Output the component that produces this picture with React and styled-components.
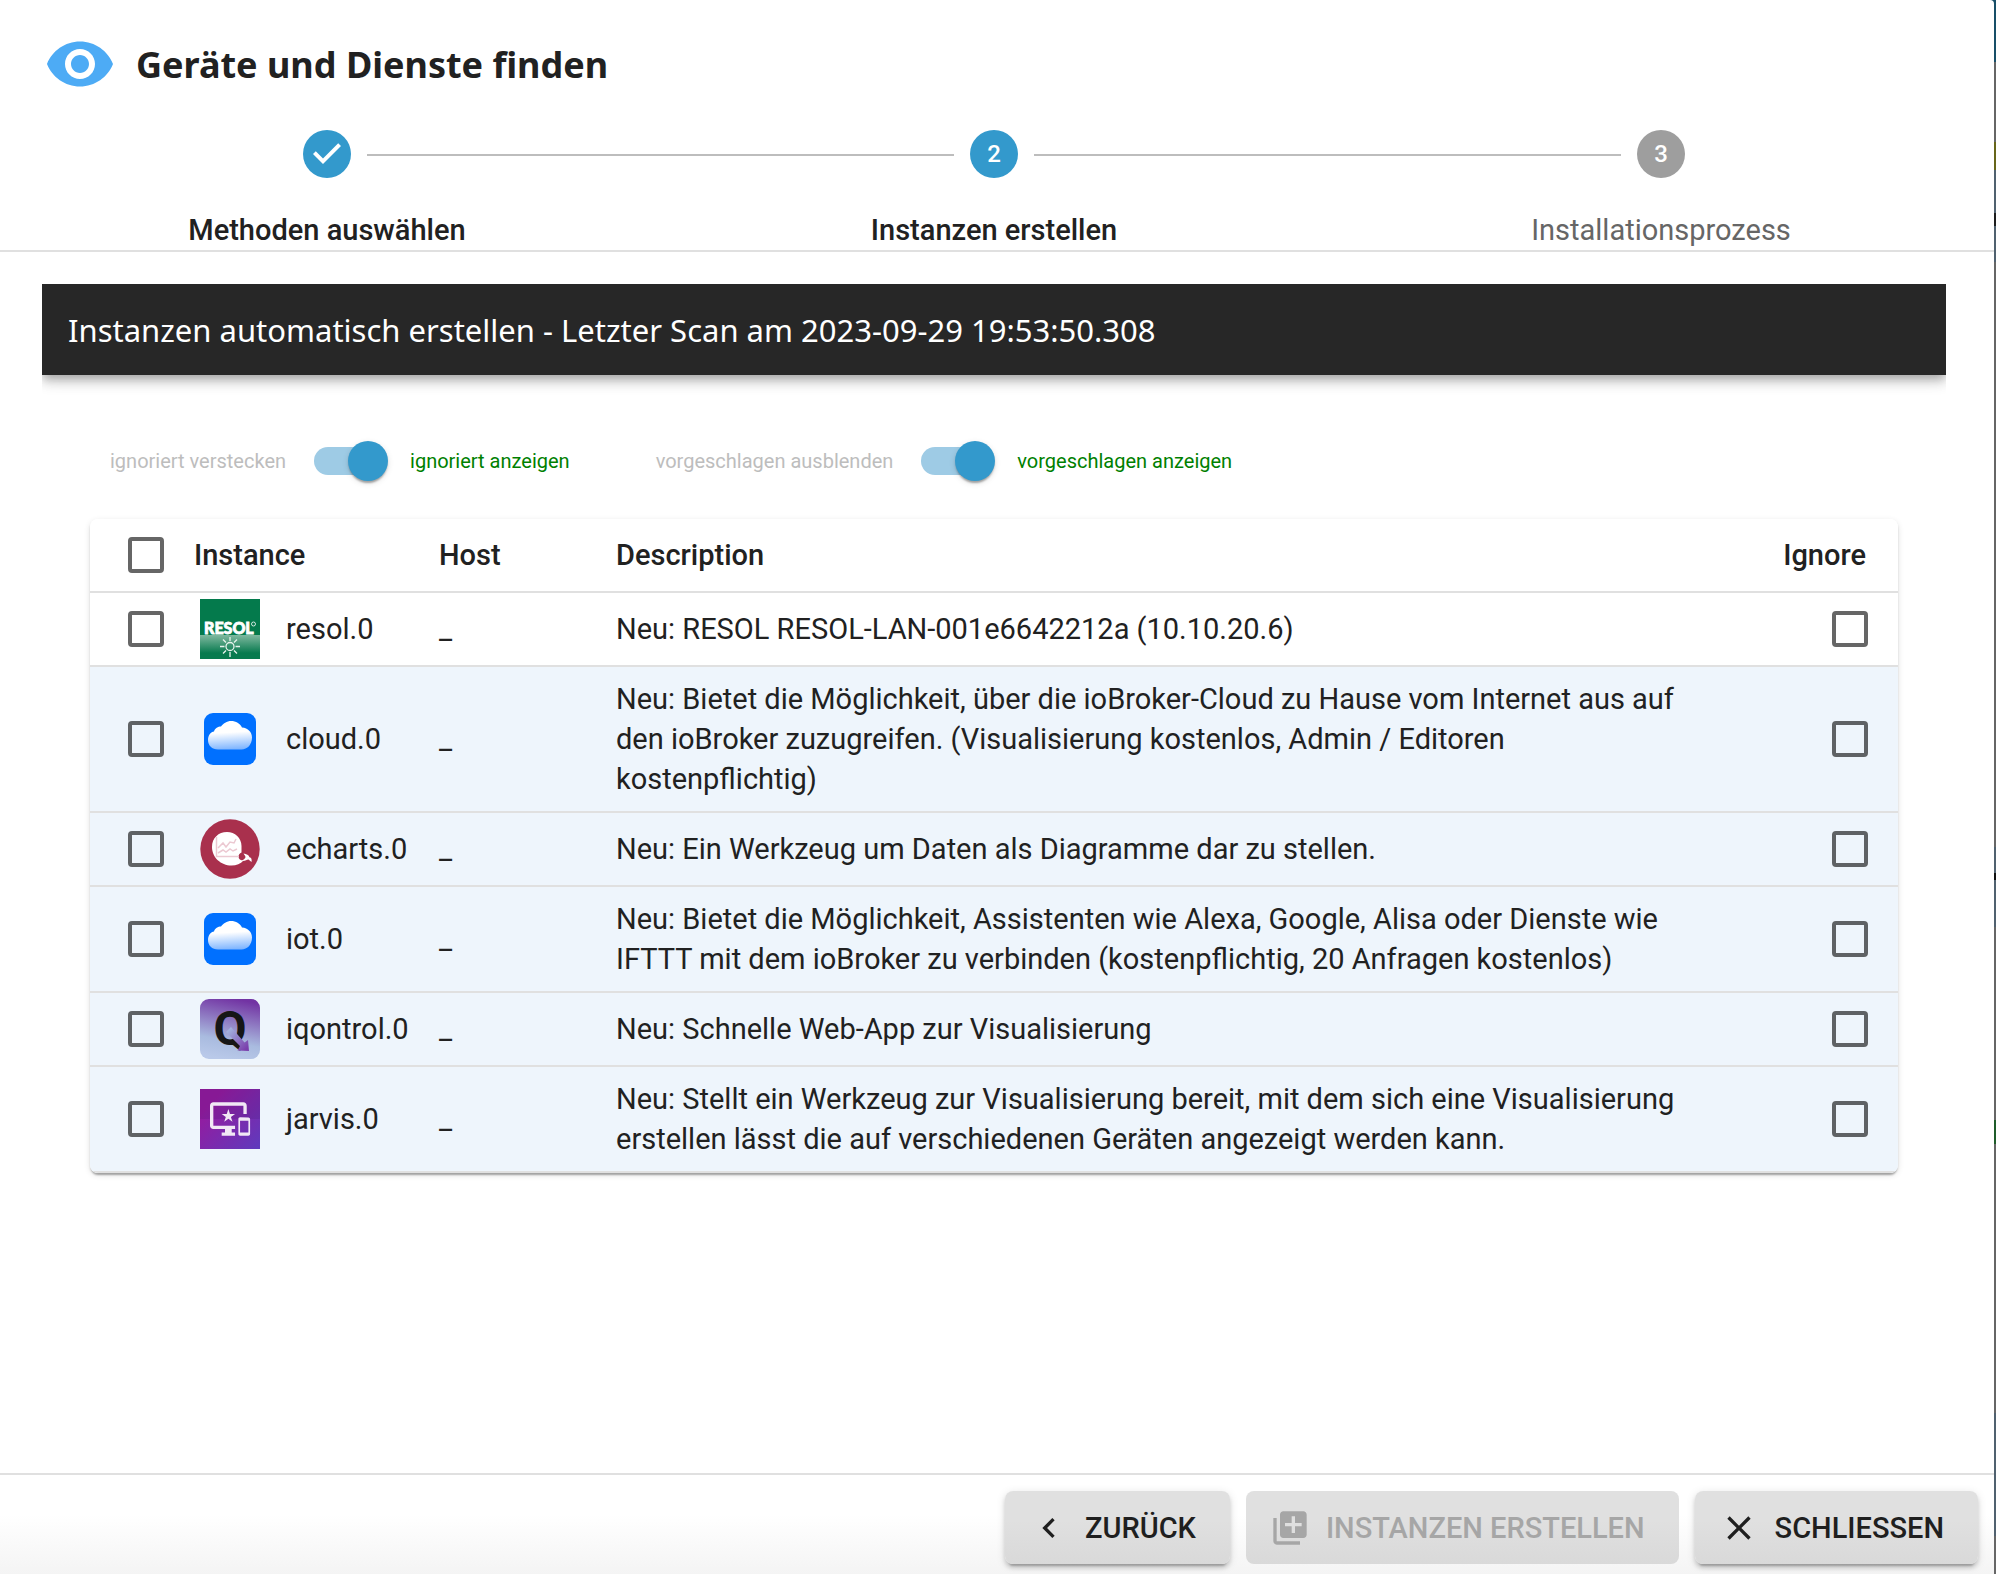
import React, { useState } from 'react';
import styled, { createGlobalStyle } from 'styled-components';

const GlobalStyle = createGlobalStyle`
    * {
        box-sizing: border-box;
    }

    body {
        margin: 0;
        background: linear-gradient(
            #184f68 62px,
            #666 62px 142px,
            #67661a 142px 170px,
            #50616f 170px 213px,
            #1e1e1e 213px 226px,
            #50616f 226px 262px,
            #666 262px 847px,
            #50616f 847px 873px,
            #111 873px 880px,
            #50616f 880px 927px,
            #666 927px 1120px,
            #1f5c2a 1120px 1144px,
            #666 1144px 1413px,
            #50616f 1413px 1536px,
            #666 1536px
        );
        color: #212121;
        font-family: Roboto, sans-serif;
        font-size: 29px;
        line-height: 40px;
    }
`;

const Dialog = styled.main`
    display: flex;
    flex-direction: column;
    min-height: 100vh;
    margin-right: 2px;
    border-top-right-radius: 4px;
    background: #fff;
`;

const Title = styled.header`
    display: flex;
    align-items: center;
    gap: 20px;
    padding: 28px 44px 30px;

    h1 {
        margin: 0;
        padding-top: 2px;
        font-family: "Noto Sans", sans-serif;
        font-size: 36px;
        line-height: 70px;
        font-weight: 700;
    }
`;

const Steps = styled.ol`
    display: grid;
    grid-template-columns: 654fr 680fr 654fr;
    margin: 0;
    padding: 0 6px 0 0;
    list-style: none;
    border-bottom: 2px solid #e0e0e0;
`;

const Step = styled.li`
    display: grid;
    grid-template-columns: 1fr 48px 1fr;
    align-items: center;
    column-gap: 16px;
    row-gap: 32px;
    color: ${props => props.$reached ? '#212121' : '#666'};
    font-weight: ${props => props.$reached ? 500 : 400};
`;

const StepLine = styled.span`
    height: 2px;
    margin-top: 2px;
    background: ${props => props.$hidden ? 'transparent' : '#bdbdbd'};
`;

const StepCircle = styled.span`
    display: flex;
    align-items: center;
    justify-content: center;
    height: 48px;
    border-radius: 50%;
    background: ${props => props.$reached ? '#3399cc' : '#9e9e9e'};
    color: #fff;
    font-size: 24px;
    font-weight: 500;
`;

const StepLabel = styled.span`
    grid-column: 1 / -1;
    text-align: center;
`;

const Content = styled.section`
    flex: 1;
    padding: 32px 48px 0 42px;
`;

const BannerClip = styled.div`
    overflow: hidden;
    padding-bottom: 20px;
`;

const Banner = styled.h2`
    margin: 0;
    padding: 26px 26px 25px;
    background: #272727;
    color: #fff;
    font-family: "Noto Sans", sans-serif;
    font-size: 31px;
    line-height: 40px;
    font-weight: 400;
    box-shadow: 0 4px 8px -2px rgba(0,0,0,0.2), 0 8px 10px rgba(0,0,0,0.14), 0 2px 20px rgba(0,0,0,0.12);
`;

const Filters = styled.div`
    display: flex;
    gap: 86px;
    padding: 46px 68px 38px;
`;

const FilterLabel = styled.label`
    display: flex;
    align-items: center;
    font-size: 20px;
    line-height: 40px;
`;

const FilterText = styled.span`
    color: ${props => props.$active ? '#008000' : '#bdbdbd'};
`;

const Switch = styled.input`
    appearance: none;
    display: flex;
    align-items: center;
    width: 68px;
    height: 28px;
    margin: 0 28px;
    border-radius: 14px;
    background: ${props => props.checked ? '#9ecbe5' : '#9e9e9e'};
    cursor: pointer;

    &::before {
        content: '';
        flex: none;
        width: 40px;
        height: 40px;
        margin-left: ${props => props.checked ? '34px' : '-6px'};
        border-radius: 50%;
        background: ${props => props.checked ? '#3399cc' : '#fafafa'};
        box-shadow: 0 4px 2px -2px rgba(0,0,0,0.2), 0 2px 2px rgba(0,0,0,0.14), 0 2px 6px rgba(0,0,0,0.12);
    }
`;

const Card = styled.div`
    margin: 0 48px;
    border-radius: 8px;
    overflow: hidden;
    box-shadow: 0 4px 2px -2px rgba(0,0,0,0.2), 0 2px 2px rgba(0,0,0,0.14), 0 2px 6px rgba(0,0,0,0.12);
`;

const Table = styled.table`
    width: 100%;
    table-layout: fixed;
    border-collapse: separate;
    border-spacing: 0;
`;

const Col = styled.col`
    width: ${props => props.$width || 'auto'};
`;

const Row = styled.tr`
    background: ${props => props.$tinted ? '#eef5fc' : '#fff'};
`;

const HeadCell = styled.th`
    height: 74px;
    padding: ${props => props.$align === 'right' ? '0 32px 0 0' : '0'};
    border-bottom: 2px solid #e0e0e0;
    font-weight: 500;
    text-align: ${props => props.$align || 'left'};
`;

const Cell = styled.td`
    height: 74px;
    padding: 0;
    border-bottom: 2px solid #e0e0e0;
`;

const TextCell = styled(Cell)`
    padding: 12px 12px 12px 0;
`;

const IgnoreCell = styled(Cell)`
    padding-right: 30px;
`;

const Instance = styled.div`
    display: flex;
    align-items: center;
    gap: 26px;
    padding-left: 6px;
`;

const Checkbox = styled.input`
    appearance: none;
    display: block;
    width: 36px;
    height: 36px;
    margin: ${props => props.$lead ? '0 0 0 38px' : '0 0 0 auto'};
    border: 4px solid rgba(0,0,0,0.6);
    border-radius: 4px;
    cursor: pointer;

    &:checked {
        border-color: #3399cc;
        background: #3399cc;
    }
`;

const Footer = styled.footer`
    display: flex;
    justify-content: flex-end;
    gap: 16px;
    padding: 16px 16px 10px;
    border-top: 2px solid #e0e0e0;
    background: linear-gradient(#fff 40%, #f4f4f4);
`;

const Button = styled.button`
    display: flex;
    align-items: center;
    gap: 16px;
    height: 73px;
    padding: 0 34px 0 24px;
    border: 0;
    border-radius: 8px;
    background: linear-gradient(#e0e0e0 40%, #d9d9d9);
    color: #1f1f1f;
    font-family: inherit;
    font-size: 29px;
    font-weight: 500;
    text-transform: uppercase;
    box-shadow: 0 6px 2px -4px rgba(0,0,0,0.2), 0 4px 4px rgba(0,0,0,0.14), 0 2px 10px rgba(0,0,0,0.12);
    cursor: pointer;

    &:disabled {
        color: #a6a6a6;
        box-shadow: none;
        cursor: default;
    }
`;

const Icon = ({ size = 40, color = 'currentColor', d }) => (
    <svg width={size} height={size} viewBox="0 0 24 24" fill={color} aria-hidden="true">
        <path d={d} />
    </svg>
);

const EYE = 'M12 4.5C7 4.5 2.73 7.61 1 12c1.73 4.39 6 7.5 11 7.5s9.27-3.11 11-7.5c-1.73-4.39-6-7.5-11-7.5zM12 17c-2.76 0-5-2.24-5-5s2.24-5 5-5 5 2.24 5 5-2.24 5-5 5zm0-8c-1.66 0-3 1.34-3 3s1.34 3 3 3 3-1.34 3-3-1.34-3-3-3z';
const CHECK = 'M10 17l-5-5 1.4-1.4 3.6 3.6 7.6-7.6L19 8l-9 9z';
const BACK = 'M15.41 7.41L14 6l-6 6 6 6 1.41-1.41L10.83 12z';
const ADD = 'M4 6H2v14c0 1.1.9 2 2 2h14v-2H4V6zm16-4H8c-1.1 0-2 .9-2 2v12c0 1.1.9 2 2 2h12c1.1 0 2-.9 2-2V4c0-1.1-.9-2-2-2zm-1 9h-4v4h-2v-4H9V9h4V5h2v4h4v2z';
const CLOSE = 'M19 6.41L17.59 5 12 10.59 6.41 5 5 6.41 10.59 12 5 17.59 6.41 19 12 13.41 17.59 19 19 17.59 13.41 12z';

const ResolLogo = () => (
    <svg width="60" height="60" viewBox="0 0 60 60" aria-hidden="true">
        <defs>
            <linearGradient id="resol" x1="0" y1="0" x2="0" y2="1">
                <stop offset="0" stopColor="#7fb99f" />
                <stop offset="0.75" stopColor="#077a4e" />
            </linearGradient>
        </defs>
        <rect width="60" height="60" fill="#047a4c" />
        <rect y="36" width="60" height="24" fill="url(#resol)" />
        <text x="4" y="35" fill="#fff" stroke="#fff" strokeWidth="0.8" fontFamily="Lato, sans-serif" fontWeight="900" fontSize="16">RESOL</text>
        <circle cx="53.500" cy="25" r="2" fill="none" stroke="#fff" strokeWidth="0.8" />
        <g fill="none" stroke="#e6f3ec" strokeWidth="1.3">
            <circle cx="30" cy="47.5" r="4" />
            <path d="M30 38v4M30 53v5M20 47.5h4.5M35.5 47.5H40M23 40.5l3 3M34 51.5l3 3M37 40.5l-3 3M26 51.5l-3 3" />
        </g>
    </svg>
);

const CloudLogo = ({ id }) => (
    <svg width="60" height="60" viewBox="0 0 60 60" aria-hidden="true">
        <defs>
            <linearGradient id={id} x1="0.45" y1="0" x2="0.55" y2="1">
                <stop offset="0.4" stopColor="#fff" />
                <stop offset="1" stopColor="#7db4ff" />
            </linearGradient>
        </defs>
        <rect x="4" y="4" width="52" height="52" rx="9" fill="#0070ff" />
        <path d="M18 41.5C12 41.5 8 37.5 8 32c0-5 3-8 6-8.500 1-3.500 4-5 7-5 2-3 6-5.500 10-5.500 5 0 9 2.500 11 6.500 6 .5 10 4.500 10 10 0 7-4.500 12-10.500 12z" fill={`url(#${id})`} transform="translate(0 -1)" />
    </svg>
);

const EchartsLogo = () => (
    <svg width="60" height="60" viewBox="0 0 60 60" aria-hidden="true">
        <circle cx="30" cy="30" r="29.7" fill="#a9304d" />
        <path d="M27 13c8 0 14.500 6 14.500 14v6.500c-2 .8-3 2.500-3 4 0 2.500 2 4 5 4-3 3.500-7 5-12 5C21 46.500 12 38.500 12 28c0-9 6.500-15 15-15z" fill="#fff" />
        <g fill="none" stroke="#ecc9d2" strokeWidth="1.5">
            <path d="M16.500 18v19.500H39" />
            <path d="M18 29l5-5 3 4 4-5 4 1 2-4M18 34l5-3 3 2 4-3 3 2 4-2" />
        </g>
        <path d="M41.500 42c2-1.500 4-2.500 4-4-.3-1.500-1.200-2-2-3.500 3 .3 5.500 1.700 6 3.700 2 .3 2.500 2 2 4.800l-3-2.500c-2 0-3 2-7 1.500z" fill="#fff" />
    </svg>
);

const IqontrolLogo = () => (
    <svg width="60" height="60" viewBox="0 0 60 60" aria-hidden="true">
        <defs>
            <linearGradient id="iqBack" x1="0.6" y1="0" x2="0.4" y2="1">
                <stop offset="0" stopColor="#7233a3" />
                <stop offset="0.7" stopColor="#a9bbdf" />
                <stop offset="1" stopColor="#b9c9e9" />
            </linearGradient>
            <linearGradient id="iqArrow" x1="0" y1="0" x2="1" y2="1">
                <stop offset="0" stopColor="#a9c4e6" />
                <stop offset="0.9" stopColor="#7a3fac" />
            </linearGradient>
        </defs>
        <rect width="60" height="60" rx="9" fill="url(#iqBack)" />
        <text x="30" y="46" textAnchor="middle" fill="#161616" fontFamily="Roboto, sans-serif" fontWeight="700" fontSize="48">Q</text>
        <path d="M31 28l-5 5 14 14-2.500 4.500 11.500.5-1-11-3.500 2.500z" fill="url(#iqArrow)" />
    </svg>
);

const JarvisLogo = () => (
    <svg width="60" height="60" viewBox="0 0 60 60" aria-hidden="true">
        <defs>
            <linearGradient id="jarvis" x1="0" y1="0" x2="1" y2="1">
                <stop offset="0.2" stopColor="#951b9f" />
                <stop offset="1" stopColor="#5e3bbd" />
            </linearGradient>
        </defs>
        <rect width="60" height="60" fill="url(#jarvis)" />
        <rect width="60" height="30" fill="rgba(40,20,80,0.12)" />
        <g transform="translate(10 10) scale(1.67)">
            <path fill="#f1e8f5" d="M23 11.01L18 11c-.55 0-1 .45-1 1v9c0 .55.45 1 1 1h5c.55 0 1-.45 1-1v-9c0-.55-.45-.99-1-.99zM23 20h-5v-7h5v7zM20 2H2C.89 2 0 2.89 0 4v12c0 1.1.89 2 2 2h7v2H7v2h8v-2h-2v-2h2v-2H2V4h18v5h2V4c0-1.11-.9-2-2-2zm-8.030 7L11 6l-.97 3H7l2.47 1.76-.94 2.91 2.47-1.8 2.47 1.8-.94-2.91L15 9h-3.030z" />
        </g>
    </svg>
);

const steps = [
    { label: 'Methoden auswählen', mark: <Icon size={48} d={CHECK} />, reached: true },
    { label: 'Instanzen erstellen', mark: '2', reached: true },
    { label: 'Installationsprozess', mark: '3', reached: false }
];

const instances = [
    { name: 'resol.0', logo: <ResolLogo />, text: 'Neu: RESOL RESOL-LAN-001e6642212a (10.10.20.6)', device: true },
    { name: 'cloud.0', logo: <CloudLogo id="cloud" />, text: 'Neu: Bietet die Möglichkeit, über die ioBroker-Cloud zu Hause vom Internet aus auf den ioBroker zuzugreifen. (Visualisierung kostenlos, Admin / Editoren kostenpflichtig)' },
    { name: 'echarts.0', logo: <EchartsLogo />, text: 'Neu: Ein Werkzeug um Daten als Diagramme dar zu stellen.' },
    { name: 'iot.0', logo: <CloudLogo id="iot" />, text: 'Neu: Bietet die Möglichkeit, Assistenten wie Alexa, Google, Alisa oder Dienste wie IFTTT mit dem ioBroker zu verbinden (kostenpflichtig, 20 Anfragen kostenlos)' },
    { name: 'iqontrol.0', logo: <IqontrolLogo />, text: 'Neu: Schnelle Web-App zur Visualisierung' },
    { name: 'jarvis.0', logo: <JarvisLogo />, text: 'Neu: Stellt ein Werkzeug zur Visualisierung bereit, mit dem sich eine Visualisierung erstellen lässt die auf verschiedenen Geräten angezeigt werden kann.' }
];

const FilterSwitch = ({ off, on }) => {
    const [checked, setChecked] = useState(true);

    return (
        <FilterLabel>
            <FilterText $active={!checked}>{off}</FilterText>
            <Switch type="checkbox" role="switch" checked={checked} onChange={e => setChecked(e.target.checked)} />
            <FilterText $active={checked}>{on}</FilterText>
        </FilterLabel>
    );
};

export default function App() {
    const [selected, setSelected] = useState([]);
    const [ignored, setIgnored] = useState([]);

    const toggle = (list, name) => list.includes(name) ? list.filter(n => n !== name) : [...list, name];
    const allSelected = selected.length === instances.length;

    return (
        <>
            <GlobalStyle />
            <Dialog>
                <Title>
                    <Icon size={72} color="#4dabf5" d={EYE} />
                    <h1>Geräte und Dienste finden</h1>
                </Title>
                <Steps>
                    {steps.map((step, i) => (
                        <Step key={step.label} $reached={step.reached}>
                            <StepLine $hidden={i === 0} />
                            <StepCircle $reached={step.reached}>{step.mark}</StepCircle>
                            <StepLine $hidden={i === steps.length - 1} />
                            <StepLabel>{step.label}</StepLabel>
                        </Step>
                    ))}
                </Steps>
                <Content>
                    <BannerClip>
                        <Banner>Instanzen automatisch erstellen - Letzter Scan am 2023-09-29 19:53:50.308</Banner>
                    </BannerClip>
                    <Filters>
                        <FilterSwitch off="ignoriert verstecken" on="ignoriert anzeigen" />
                        <FilterSwitch off="vorgeschlagen ausblenden" on="vorgeschlagen anzeigen" />
                    </Filters>
                    <Card>
                        <Table>
                            <colgroup>
                                <Col $width="104px" />
                                <Col $width="245px" />
                                <Col $width="177px" />
                                <Col />
                                <Col $width="208px" />
                            </colgroup>
                            <thead>
                                <Row>
                                    <HeadCell>
                                        <Checkbox
                                            $lead
                                            type="checkbox"
                                            aria-label="Alle auswählen"
                                            checked={allSelected}
                                            onChange={() => setSelected(allSelected ? [] : instances.map(i => i.name))}
                                        />
                                    </HeadCell>
                                    <HeadCell>Instance</HeadCell>
                                    <HeadCell>Host</HeadCell>
                                    <HeadCell>Description</HeadCell>
                                    <HeadCell $align="right">Ignore</HeadCell>
                                </Row>
                            </thead>
                            <tbody>
                                {instances.map(item => (
                                    <Row key={item.name} $tinted={!item.device}>
                                        <Cell>
                                            <Checkbox
                                                $lead
                                                type="checkbox"
                                                aria-label={item.name}
                                                checked={selected.includes(item.name)}
                                                onChange={() => setSelected(toggle(selected, item.name))}
                                            />
                                        </Cell>
                                        <Cell><Instance>{item.logo}{item.name}</Instance></Cell>
                                        <Cell>_</Cell>
                                        <TextCell>{item.text}</TextCell>
                                        <IgnoreCell>
                                            <Checkbox
                                                type="checkbox"
                                                aria-label={`${item.name} ignorieren`}
                                                checked={ignored.includes(item.name)}
                                                onChange={() => setIgnored(toggle(ignored, item.name))}
                                            />
                                        </IgnoreCell>
                                    </Row>
                                ))}
                            </tbody>
                        </Table>
                    </Card>
                </Content>
                <Footer>
                    <Button type="button"><Icon d={BACK} />Zurück</Button>
                    <Button type="button" disabled><Icon d={ADD} />Instanzen erstellen</Button>
                    <Button type="button"><Icon d={CLOSE} />Schliessen</Button>
                </Footer>
            </Dialog>
        </>
    );
}
